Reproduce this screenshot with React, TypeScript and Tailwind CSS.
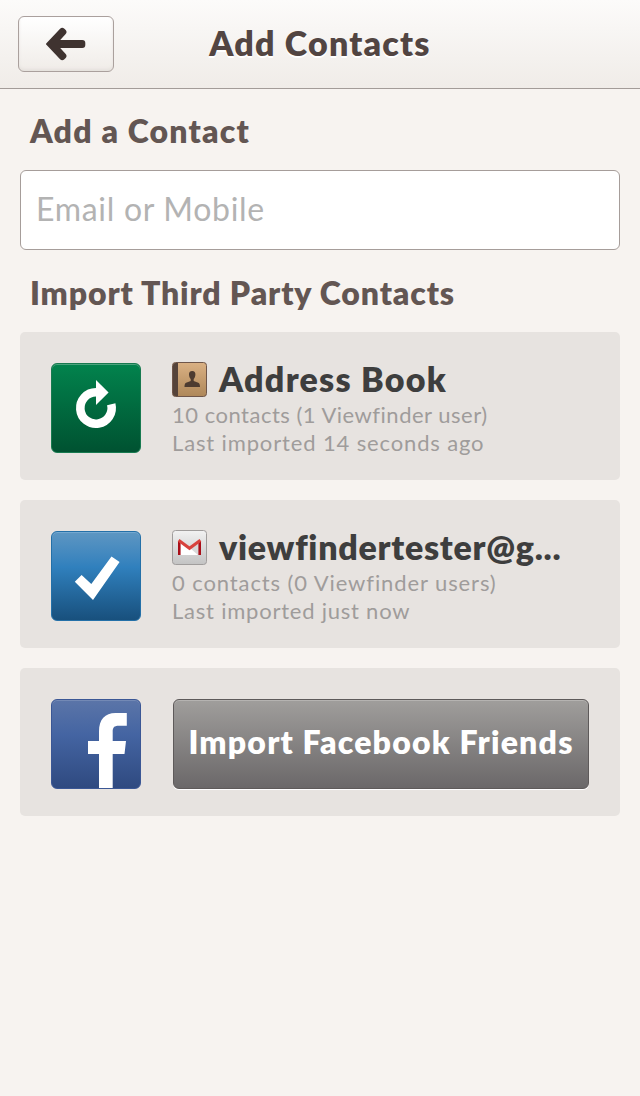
import type { ReactNode } from "react";

function BackIcon() {
  return (
    <svg width="40" height="34" viewBox="0 0 40 34" fill="#3f3330">
      <path d="M.4 17.800Q-.4 17 .4 16.200L14.100 1.700q2-1.900 4.300 0l1.300 1.300q1.700 2 0 4L14.200 13H36.300q3 0 3 3v2q0 3-3 3H14.200l5.500 6q1.700 2 0 4l-1.300 1.300q-2.300 1.900-4.300 0z" />
    </svg>
  );
}

function RefreshIcon() {
  return (
    <svg width="90" height="90" viewBox="0 0 90 90">
      <path d="M45 29.300A15.700 15.700 0 1 0 60.230 41.200" fill="none" stroke="#fff" strokeWidth="8.600" />
      <path d="M45 17 57.600 29.400 45 42z" fill="#fff" />
    </svg>
  );
}

function CheckIcon() {
  return (
    <svg width="90" height="90" viewBox="0 0 90 90">
      <path d="M23.800 50.800 30.600 44 40.300 53 60.500 25.500 68.600 31 42 69z" fill="#fff" />
    </svg>
  );
}

function FacebookIcon() {
  return (
    <svg width="90" height="90" viewBox="0 0 90 90">
      <path d="M48 89V55H37V42h11V32.500C48 20.500 54 14 64.500 14H75.800v12.800h-8c-5 0-6.100 2-6.100 6.200V42H75l-1.500 13H61.700V89z" fill="#fff" />
    </svg>
  );
}

function AddressBookIcon() {
  return (
    <svg className="shrink-0" width="35" height="35" viewBox="0 0 35 35">
      <defs>
        <linearGradient id="tan" x1="0" y1="0" x2="0" y2="1">
          <stop stopColor="#dab184" />
          <stop offset="1" stopColor="#ae8759" />
        </linearGradient>
      </defs>
      <rect x=".5" y=".5" width="34" height="34" rx="3" fill="url(#tan)" stroke="#6f564a" />
      <path d="M3.500 1H6v33H3.500A2.500 2.500 0 0 1 1 31.500v-28A2.500 2.500 0 0 1 3.500 1z" fill="#55433a" />
      <path d="M20.200 9c2.300 0 3.400 1.600 3.200 3.700-.1 1.900-.8 3.300-1.700 4.200v2.100l4.600 1.700c1.200.5 1.700 1.800 1.700 4.300H12.500c0-2.500.4-3.800 1.600-4.300l4.600-1.700v-2.100c-.9-.9-1.600-2.300-1.700-4.200C16.800 10.600 17.900 9 20.200 9z" fill="#4d3b30" />
    </svg>
  );
}

function GmailIcon() {
  return (
    <svg className="shrink-0" width="35" height="35" viewBox="0 0 35 35">
      <defs>
        <linearGradient id="silver" x1="0" y1="0" x2="0" y2="1">
          <stop stopColor="#f2f2f2" />
          <stop offset="1" stopColor="#c3c3c3" />
        </linearGradient>
      </defs>
      <rect x=".5" y=".5" width="34" height="34" rx="3" fill="url(#silver)" stroke="#a09d9c" />
      <path d="M7 11 17.500 18 28 11V25H7z" fill="#fff" />
      <path d="M27 12.500V25H26L18.500 18.500z" fill="#d8d8d8" />
      <path d="M7.300 25V11M27.700 25V11" stroke="#a90f19" strokeWidth="2.600" />
      <path d="M6.600 10.200 17.500 18.300 28.400 10.200" fill="none" stroke="#d8423d" strokeWidth="3" />
    </svg>
  );
}

function Tile({ tone, children }: { tone: string; children: ReactNode }) {
  return <div className={`h-[90px] w-[90px] shrink-0 overflow-hidden rounded-[6px] ${tone}`}>{children}</div>;
}

function Card({ children }: { children: ReactNode }) {
  return <section className="flex h-[148px] rounded-[5px] bg-[#e7e3e0] pl-[31px]">{children}</section>;
}

type SourceProps = {
  tile: ReactNode;
  icon: ReactNode;
  name: ReactNode;
  count: ReactNode;
  imported: ReactNode;
};

function Source({ tile, icon, name, count, imported }: SourceProps) {
  return (
    <Card>
      <div className="pt-[31px]">{tile}</div>
      <div className="ml-[31px] pt-[30px]">
        <div className="flex h-[35px] items-center gap-3">
          {icon}
          <h3 className="pb-[1px] text-[34px] leading-[32px] font-extrabold whitespace-nowrap text-[#3e3e3e]">{name}</h3>
        </div>
        <div className="mt-[4px] text-[22px] leading-[28px] whitespace-nowrap text-[#9f9c9b]">
          <p>{count}</p>
          <p>{imported}</p>
        </div>
      </div>
    </Card>
  );
}

export default function App() {
  return (
    <div className="h-[1096px] w-[640px] overflow-hidden bg-[#f7f3f0] font-['Lato',sans-serif]">
      <header className="grid h-[89px] grid-cols-[96px_1fr_96px] border-b border-[#a39c98] bg-linear-to-b from-[#fcfbfa] to-[#f0ece8] px-[18px]">
        <button
          aria-label="Back"
          className="mt-4 flex h-14 items-center justify-center rounded-[6px] border border-[#aaa09d] bg-linear-to-b from-white to-[#f0ece8] shadow-[inset_0_-2px_3px_#e5e1dd]"
        >
          <BackIcon />
        </button>
        <h1 className="text-center text-[34px] leading-[86px] font-extrabold whitespace-nowrap text-[#524542] [text-shadow:0_2px_0_#fff]">
          <span className="tracking-[1.2px]">Add Contacts</span>
        </h1>
      </header>
      <main className="px-5">
        <h2 className="h-[81px] pl-[10px] text-[32px] leading-[83px] font-extrabold text-[#635653]">
          <span className="tracking-[1.2px]">Add a Contact</span>
        </h2>
        <input
          placeholder="Email or Mobile"
          className="block h-20 w-full rounded-[6px] border border-[#a69d9a] bg-white px-[15px] pb-1 text-[32px] tracking-[0.7px] outline-none placeholder:text-[#b3b3b3]"
        />
        <h2 className="h-[82px] pl-[10px] text-[32px] leading-[85px] font-extrabold text-[#635653]">
          <span className="tracking-[0.87px]">Import Third Party Contacts</span>
        </h2>
        <div className="flex flex-col gap-5">
          <Source
            tile={
              <Tile tone="border border-[#187a50] bg-linear-to-b from-[#02834d] to-[#005231] shadow-[inset_0_1px_0_#4ba37d] *:-m-px">
                <RefreshIcon />
              </Tile>
            }
            icon={<AddressBookIcon />}
            name={<span className="tracking-[1.25px]">Address Book</span>}
            count={<span className="tracking-[0.5px]">10 contacts (1 Viewfinder user)</span>}
            imported={<span className="tracking-[0.86px]">Last imported 14 seconds ago</span>}
          />
          <Source
            tile={
              <Tile tone="border border-[#2470a8] bg-linear-to-b from-[#5d96c2] via-[#3080bd] via-40% to-[#18507d] shadow-[inset_0_1px_0_#74a8d0] *:-m-px">
                <CheckIcon />
              </Tile>
            }
            icon={<GmailIcon />}
            name={<span className="tracking-[0.73px]">viewfindertester@g...</span>}
            count={<span className="tracking-[0.9px]">0 contacts (0 Viewfinder users)</span>}
            imported={<span className="tracking-[0.77px]">Last imported just now</span>}
          />
          <Card>
            <div className="pt-[31px]">
              <Tile tone="border border-[#3b5795] bg-linear-to-b from-[#5b75a8] via-[#4464a2] via-40% to-[#2f4a80] shadow-[inset_0_1px_0_#7389b5] *:-m-px">
                <FacebookIcon />
              </Tile>
            </div>
            <button className="mt-[31px] ml-8 flex h-[90px] w-[416px] justify-center rounded-[6px] border border-[#5e5a5a] bg-linear-to-b from-[#a09e9c] to-[#6b6869] text-[32px] leading-[84px] font-extrabold whitespace-nowrap text-white shadow-[0_1px_0_#fff,inset_0_1px_0_#b5b3b1]">
              <span className="tracking-[1.2px]">Import Facebook Friends</span>
            </button>
          </Card>
        </div>
      </main>
    </div>
  );
}
